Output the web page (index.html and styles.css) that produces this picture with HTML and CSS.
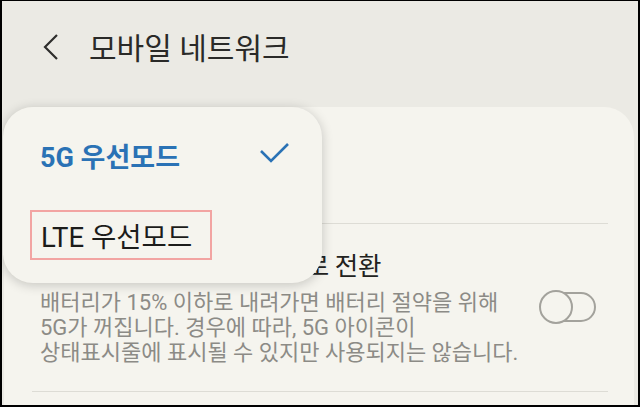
FILE: index.html
```html
<!DOCTYPE html>
<html lang="ko">
<head>
    <meta charset="UTF-8">
    <meta name="viewport" content="width=device-width, initial-scale=1.0">
    <title>모바일 네트워크</title>
    <link rel="stylesheet" href="styles.css">
</head>
<body>
<div class="screen">
    <header class="topbar">
        <svg class="back" width="18" height="28" viewBox="0 0 18 28">
            <path d="M15 2 L3 14 L15 26"/>
        </svg>
        <h1 class="title">모바일 네트워크</h1>
    </header>

    <section class="card">
        <!-- network mode row, covered by the dropdown -->
        <div class="row mode"></div>
        <div class="divider"></div>
        <div class="row saver">
            <div class="saver-text">
                <div class="row-title">배터리가 부족할 때는 LTE로 전환</div>
                <p class="row-desc">배터리가 15% 이하로 내려가면 배터리 절약을 위해<br>5G가 꺼집니다. 경우에 따라, 5G 아이콘이<br>상태표시줄에 표시될 수 있지만 사용되지는 않습니다.</p>
            </div>
            <svg class="switch" width="60" height="36" viewBox="0 0 60 36">
                <rect x="3" y="4" width="54" height="28" rx="14"/>
                <circle cx="18" cy="18" r="16"/>
            </svg>
        </div>
        <div class="divider"></div>
    </section>

    <!-- dropdown opened over the list -->
    <div class="popup">
        <div class="option selected">
            <span>5G 우선모드</span>
            <svg class="check" width="32" height="24" viewBox="0 0 32 24">
                <path d="M3 9 L13 19 L30 2"/>
            </svg>
        </div>
        <div class="option">
            <span class="highlight">LTE 우선모드</span>
        </div>
    </div>
</div>
</body>
</html>
```

FILE: styles.css
```css
* {
    box-sizing: border-box;
}

body {
    margin: 0;
    background-color: #000;
    font-family: Roboto, "Noto Sans CJK KR", sans-serif;
}

.screen {
    position: relative;
    width: 640px;
    height: 407px;
    border: 2px solid #000;
    border-top-width: 1px;
    background-color: #ebeae4;
    display: flex;
    flex-direction: column;
    overflow: hidden;
}

.topbar {
    height: 106px;
    flex-shrink: 0;
    display: flex;
    align-items: center;
    padding-left: 40px;
    padding-bottom: 16px;
}

.back {
    fill: none;
    stroke: #2e2e2c;
    stroke-width: 2.2;
    margin-top: 1px;
}

.title {
    margin: 0 0 0 29px;
    font-size: 30px;
    font-weight: 400;
    color: #2a2a28;
}

.card {
    flex: 1;
    margin: 0 4px 0 2px;
    background-color: #f5f4ee;
    border-radius: 30px 30px 0 0;
}

.row.mode {
    height: 116px;
}

.divider {
    height: 1px;
    margin: 0 26px 0 28px;
    background-color: #dddcd5;
}

.row.saver {
    height: 167px;
    display: flex;
    align-items: center;
    padding: 0 36px 0 36px;
}

.saver-text {
    flex: 1;
    align-self: flex-start;
    padding-top: 25px;
}

.row-title {
    font-size: 25.5px;
    line-height: 34px;
    letter-spacing: -0.3px;
    color: #222220;
}

.row-desc {
    margin: 7px 0 0;
    font-size: 22px;
    line-height: 25px;
    color: #8c8b86;
}

.switch {
    margin-top: -2px;
}

.switch rect,
.switch circle {
    fill: #f5f4ee;
    stroke: #a3a29c;
    stroke-width: 2;
}

.popup {
    position: absolute;
    left: 1px;
    top: 106px;
    width: 319px;
    height: 176px;
    padding: 8px 32px 8px 37px;
    background-color: #f5f4ee;
    border-radius: 30px;
    box-shadow: 0 2px 12px rgba(0, 0, 0, 0.2);
}

.option {
    height: 80px;
    display: flex;
    align-items: center;
    justify-content: space-between;
    font-size: 27.5px;
    color: #1c1c1a;
}

.option.selected {
    font-size: 27px;
    color: #2a72b5;
    font-weight: 700;
}

.check {
    fill: none;
    stroke: #2a72b5;
    stroke-width: 2.6;
    margin-top: -2px;
}

.highlight {
    display: inline-flex;
    align-items: center;
    height: 50px;
    margin-left: -10px;
    padding: 0 18px 0 9px;
    border: 2px solid #f2a4a2;
}
```
